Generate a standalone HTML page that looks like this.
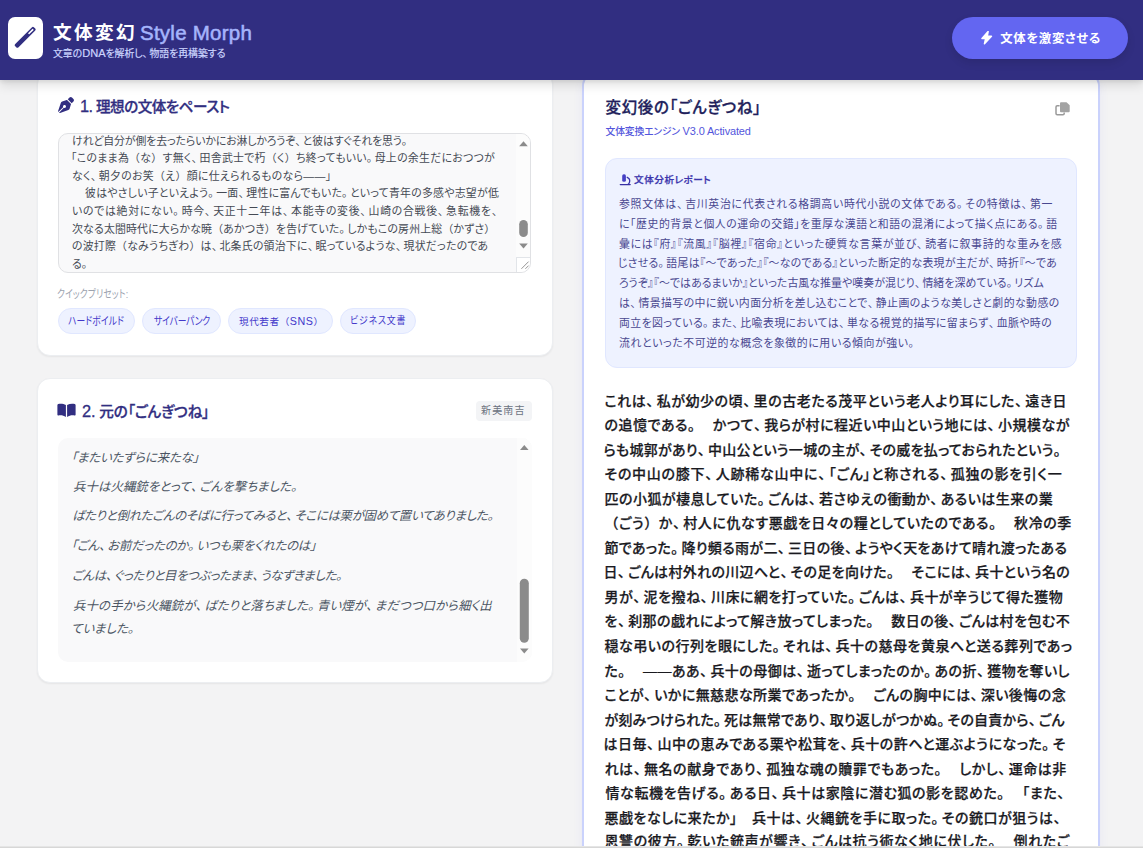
<!DOCTYPE html>
<html lang="ja">
<head>
<meta charset="utf-8">
<title>文体変幻 Style Morph</title>
<style>
*{box-sizing:border-box;margin:0;padding:0}
html,body{width:1143px;height:848px;overflow:hidden}
body{background:#f3f3f4;font-family:"Liberation Sans","Noto Sans CJK JP",sans-serif;position:relative;color:#1f2937}
.abs{position:absolute}
.t{z-index:7;transform-origin:0 50%;position:absolute;white-space:nowrap;height:30px;line-height:30px;font-feature-settings:"palt" 1;font-kerning:normal}
.t .la{font-size:1.12em}
.t .fw{font-feature-settings:"palt" 0}
.t .hw{font-feature-settings:"halt" 1;margin-right:.2em}
.ta{font-size:10.9px;color:#454a54}
.or{font-size:12.4px;color:#4b5563;font-style:italic}
.an{font-size:10.9px;color:#4a4890}
.mn{font-size:14px;color:#1a1a1f;font-weight:500;-webkit-text-stroke:0.25px #1a1a1f}
.h1{font-size:18.7px;font-weight:700;color:#fff}
.h1b{font-size:20.5px;font-weight:400;color:#a5b4fc;-webkit-text-stroke:0.55px #a5b4fc}
.sub{font-size:9.9px;color:#ccd5fe;-webkit-text-stroke:0.2px #ccd5fe}
.btnt{font-size:12.4px;font-weight:700;color:#fff}
.ct{font-size:14.6px;font-weight:500;color:#312e81;-webkit-text-stroke:0.3px #312e81}
.qp{font-size:11px;color:#9ca3af}
.pl{font-size:11px;color:#4338ca}
#p3{font-size:9.6px}
#p4{font-size:10.4px}
.tag{font-size:10px;color:#6b7280}
.rt{font-size:15.5px;font-weight:500;color:#221f5c;-webkit-text-stroke:0.3px #221f5c}
.rs{font-size:9.8px;font-weight:500;color:#5356dc}
.ant{font-size:9.6px;font-weight:500;color:#3b35ad;-webkit-text-stroke:0.25px #3b35ad}
#hdr{left:0;top:0;width:1143px;height:80px;background:#312e81;box-shadow:0 6px 10px rgba(0,0,0,.10),0 2px 4px rgba(0,0,0,.08);z-index:5}
.card{background:#fff;border:1px solid #eceef1;border-radius:13px;box-shadow:0 1px 2px rgba(0,0,0,.06)}
#logo{left:8px;top:17px;width:35px;height:42px;background:#fff;border-radius:7px;z-index:6}
#btn{left:952px;top:17px;width:176px;height:42px;border-radius:21px;background:#6366f1;box-shadow:0 4px 8px rgba(0,0,0,.10);z-index:6}
.pill{top:308px;height:25.5px;border-radius:13px;background:#eef2ff;border:1px solid #e0e7ff}
.z6{z-index:6}

</style>
</head>
<body>
<div id="hdr" class="abs"></div>
<div id="logo" class="abs"></div>
<svg class="abs z6" style="left:8px;top:17px" width="35" height="42" viewBox="0 0 35 42"><g transform="translate(17.150 20.300) rotate(-45)"><rect x="-13.300" y="-2.300" width="26.600" height="4.600" rx="1.300" fill="#312e81"/><rect x="4.800" y="-0.800" width="6.600" height="1.600" rx="0.500" fill="#fff"/></g></svg>
<div id="btn" class="abs"></div>
<svg class="abs z6" style="left:981.200px;top:31.300px" width="11.600" height="13.300" viewBox="0 0 14 16"><path d="M8.6 0.6 L1.2 8.9 L5.6 8.9 L4.2 15.4 L12.6 6.3 L7.6 6.3 Z" fill="#fff" stroke="#fff" stroke-width="1.800" stroke-linejoin="round"/></svg>

<!-- left card 1 -->
<div class="abs card" style="left:37px;top:71px;width:516px;height:284.5px"></div>
<svg class="abs" style="left:58px;top:96.800px" width="16" height="16" viewBox="0 0 512 512"><path fill="#312e81" d="M368.4 18.3L312.7 74.1 437.9 199.300l55.700-55.700c21.900-21.900 21.900-57.300 0-79.200L447.600 18.300c-21.900-21.900-57.300-21.900-79.200 0zM288 94.600l-9.200 2.800L134.700 140.600c-19.900 6-35.700 21.200-42.300 41L3.800 445.800c-3.800 11.300-1 23.900 7.300 32.400L164.700 324.700c-3-6.300-4.700-13.300-4.700-20.700c0-26.500 21.500-48 48-48s48 21.500 48 48s-21.500 48-48 48c-7.400 0-14.400-1.700-20.700-4.700L33.700 500.900c8.600 8.300 21.100 11.200 32.400 7.300l264.300-88.600c19.700-6.600 35-22.400 41-42.300l43.200-144.100 2.700-9.200L288 94.600z"/></svg>
<div class="abs" style="left:58px;top:133px;width:473px;height:139.500px;background:#f9f9fa;border:1px solid #e0e1e4;border-radius:10px;overflow:hidden">
  <div class="abs" style="left:457px;top:0;width:15px;height:124px;background:#fcfcfc"></div>
  <div class="abs" style="left:457px;top:123px;width:15px;height:15px;background:#fff;border-left:1px solid #e2e5e9;border-top:1px solid #e2e5e9"></div>
</div>
<svg class="abs" style="left:516px;top:133px" width="15" height="139" viewBox="0 0 15 139">
  <path d="M3.2 13.2 L7.5 8.2 L11.8 13.2 Z" fill="#8b8b8b"/>
  <rect x="3.2" y="87" width="8.6" height="17" rx="4.3" fill="#8b8b8b"/>
  <path d="M3.2 110.6 L11.8 110.6 L7.5 115.6 Z" fill="#8b8b8b"/>
  <path d="M12.6 128.6 L5.4 135.8 M12.6 132.6 L9.4 135.8" stroke="#7a7a7a" stroke-width="0.8" fill="none"/>
</svg>
<div class="abs pill" style="left:58px;width:76.5px"></div>
<div class="abs pill" style="left:142px;width:78.5px"></div>
<div class="abs pill" style="left:228px;width:104.7px"></div>
<div class="abs pill" style="left:340px;width:76px"></div>

<!-- left card 2 -->
<div class="abs card" style="left:37px;top:377.5px;width:516px;height:305px"></div>
<svg class="abs" style="left:57px;top:402.500px" width="19" height="15" viewBox="0 0 19 15"><path fill="#312e81" d="M8.900 2 C6.500 0.600 3.600 0.300 1.200 1 Q0.400 1.300 0.400 2.100 V11.700 Q0.400 12.700 1.400 12.500 C3.800 11.900 6.400 12.300 8.900 13.900 Z M10.100 2 C12.500 0.600 15.400 0.300 17.800 1 Q18.600 1.300 18.600 2.100 V11.700 Q18.600 12.700 17.600 12.500 C15.200 11.900 12.600 12.300 10.100 13.900 Z"/></svg>
<div class="abs" style="left:476px;top:401px;width:56px;height:20px;background:#f3f4f6;border-radius:4px"></div>
<div class="abs" style="left:57.5px;top:438px;width:474.5px;height:223.5px;background:#f9f9fa;border-radius:10px;overflow:hidden">
  <div class="abs" style="left:459.5px;top:0;width:15px;height:224px;background:#fcfcfc"></div>
</div>
<svg class="abs" style="left:517px;top:438px" width="15" height="224" viewBox="0 0 15 224">
  <path d="M3 12 L7.3 7 L11.600 12 Z" fill="#8b8b8b"/>
  <rect x="2.800" y="140.700" width="9" height="64" rx="4.500" fill="#8b8b8b"/>
  <path d="M3 210.500 L11.600 210.500 L7.300 215.500 Z" fill="#8b8b8b"/>
</svg>

<!-- right card -->
<div class="abs" style="left:582px;top:72px;width:517.5px;height:900px;background:#fff;border:2px solid #cad2fc;border-radius:14px;box-shadow:0 4px 10px rgba(99,102,241,.08)"></div>
<svg class="abs" style="left:1055px;top:102px" width="15" height="14" viewBox="0 0 15 14">
  <path d="M4.600 3.700 H2.200 Q1 3.700 1 4.900 V11.600 Q1 12.800 2.200 12.800 H8 Q9.200 12.800 9.200 11.600 V10.400" fill="none" stroke="#9a9a9a" stroke-width="1.500"/>
  <path d="M6 0.300 H11.500 L14.700 3.300 V9.300 Q14.700 10.300 13.700 10.300 H6 Q5 10.300 5 9.300 V1.300 Q5 0.300 6 0.300 Z" fill="#a3a3a3"/>
</svg>
<div class="abs" style="left:605px;top:158px;width:471.500px;height:209.500px;background:#eef2ff;border:1px solid #e0e7ff;border-radius:12px"></div>
<svg class="abs" style="left:619px;top:173px" width="13" height="13" viewBox="0 0 13 13"><rect x="3.200" y="1.300" width="3.700" height="7.500" rx="1.600" fill="#4540c4"/><path d="M8.200 4.300 Q11.300 5.700 10.600 8.800 Q10.300 10.300 9.200 11.300" fill="none" stroke="#3b35ad" stroke-width="1.300" stroke-linecap="round"/><path d="M1.300 11.600 H11.200" stroke="#3730a3" stroke-width="1.300" stroke-linecap="round"/></svg>

<div class="abs" style="left:0;top:846px;width:1143px;height:2px;background:linear-gradient(#ececec,#d0d0d0);z-index:9"></div>

<div id="ta0" class="t ta" style="left:72.00px;top:125.50px;letter-spacing:-0.106px">けれど自分が側を去ったらいかにお淋しかろうぞ<span class="hw">、</span>と彼はすぐそれを思う<span class="hw">。</span></div>
<div id="ta1" class="t ta" style="left:71.00px;top:143.14px;letter-spacing:0.294px">「このまま為<span class="fw">（</span>な<span class="fw">）</span>す無く<span class="hw">、</span>田舎武士で朽<span class="fw">（</span>く<span class="fw">）</span>ち終ってもいい<span class="hw">。</span>母上の余生だにおつつが</div>
<div id="ta2" class="t ta" style="left:72.00px;top:160.78px;letter-spacing:0.323px">なく<span class="hw">、</span>朝夕のお笑<span class="fw">（</span>え<span class="fw">）</span>顔に仕えられるものなら――」</div>
<div id="ta3" class="t ta" style="left:85.00px;top:178.42px;letter-spacing:0.244px">彼はやさしい子といえよう<span class="hw">。</span>一面<span class="hw">、</span>理性に富んでもいた<span class="hw">。</span>といって青年の多感や志望が低</div>
<div id="ta4" class="t ta" style="left:72.00px;top:196.06px;letter-spacing:0.704px">いのでは絶対にない<span class="hw">。</span>時今<span class="hw">、</span>天正十二年は<span class="hw">、</span>本能寺の変後<span class="hw">、</span>山崎の合戦後<span class="hw">、</span>急転機を<span class="hw">、</span></div>
<div id="ta5" class="t ta" style="left:72.00px;top:213.70px;letter-spacing:0.179px">次なる太閤時代に大らかな暁<span class="fw">（</span>あかつき<span class="fw">）</span>を告げていた<span class="hw">。</span>しかもこの房州上総<span class="fw">（</span>かずさ<span class="fw">）</span></div>
<div id="ta6" class="t ta" style="left:72.00px;top:231.34px;letter-spacing:0.231px">の波打際<span class="fw">（</span>なみうちぎわ<span class="fw">）</span>は<span class="hw">、</span>北条氏の領治下に<span class="hw">、</span>眠っているような<span class="hw">、</span>現状だったのであ</div>
<div id="ta7" class="t ta" style="left:72.00px;top:248.98px;letter-spacing:0.000px">る<span class="hw">。</span></div>
<div id="or0" class="t or" style="left:71.00px;top:443.05px;letter-spacing:-0.164px">「またいたずらに来たな」</div>
<div id="or1" class="t or" style="left:73.00px;top:471.80px;letter-spacing:0.079px">兵十は火縄銃をとって<span class="hw">、</span>ごんを撃ちました<span class="hw">。</span></div>
<div id="or2" class="t or" style="left:72.00px;top:501.05px;letter-spacing:-0.277px">ばたりと倒れたごんのそばに行ってみると<span class="hw">、</span>そこには栗が固めて置いてありました<span class="hw">。</span></div>
<div id="or3" class="t or" style="left:71.00px;top:531.30px;letter-spacing:-0.250px">「ごん<span class="hw">、</span>お前だったのか<span class="hw">。</span>いつも栗をくれたのは」</div>
<div id="or4" class="t or" style="left:72.00px;top:561.05px;letter-spacing:-0.420px">ごんは<span class="hw">、</span>ぐったりと目をつぶったまま<span class="hw">、</span>うなずきました<span class="hw">。</span></div>
<div id="or5" class="t or" style="left:73.00px;top:590.55px;letter-spacing:0.136px">兵十の手から火縄銃が<span class="hw">、</span>ばたりと落ちました<span class="hw">。</span>青い煙が<span class="hw">、</span>まだつつ口から細く出</div>
<div id="or6" class="t or" style="left:71.00px;top:613.80px;letter-spacing:0.000px">ていました<span class="hw">。</span></div>
<div id="an0" class="t an" style="left:619.00px;top:188.75px;letter-spacing:0.684px">参照文体は<span class="hw">、</span>吉川英治に代表される格調高い時代小説の文体である<span class="hw">。</span>その特徴は<span class="hw">、</span>第一</div>
<div id="an1" class="t an" style="left:619.00px;top:208.65px;letter-spacing:0.550px">に「歴史的背景と個人の運命の交錯」を重厚な漢語と和語の混淆によって描く点にある<span class="hw">。</span>語</div>
<div id="an2" class="t an" style="left:619.00px;top:228.55px;letter-spacing:0.685px">彙には『府』『流風』『脳裡』『宿命』といった硬質な言葉が並び<span class="hw">、</span>読者に叙事詩的な重みを感</div>
<div id="an3" class="t an" style="left:618.00px;top:248.45px;letter-spacing:0.250px">じさせる<span class="hw">。</span>語尾は『〜であった』『〜なのである』といった断定的な表現が主だが<span class="hw">、</span>時折『〜であ</div>
<div id="an4" class="t an" style="left:619.00px;top:268.35px;letter-spacing:0.077px">ろうぞ』『〜ではあるまいか』といった古風な推量や嘆奏が混じり<span class="hw">、</span>情緒を深めている<span class="hw">。</span>リズム</div>
<div id="an5" class="t an" style="left:619.00px;top:288.25px;letter-spacing:0.431px">は<span class="hw">、</span>情景描写の中に鋭い内面分析を差し込むことで<span class="hw">、</span>静止画のような美しさと劇的な動感の</div>
<div id="an6" class="t an" style="left:619.00px;top:308.15px;letter-spacing:0.394px">両立を図っている<span class="hw">。</span>また<span class="hw">、</span>比喩表現においては<span class="hw">、</span>単なる視覚的描写に留まらず<span class="hw">、</span>血脈や時の</div>
<div id="an7" class="t an" style="left:619.00px;top:328.05px;letter-spacing:0.577px">流れといった不可逆的な概念を象徴的に用いる傾向が強い<span class="hw">。</span></div>
<div id="mn0" class="t mn" style="left:604.50px;top:385.85px;letter-spacing:0.553px">これは<span class="hw">、</span>私が幼少の頃<span class="hw">、</span>里の古老たる茂平という老人より耳にした<span class="hw">、</span>遠き日</div>
<div id="mn1" class="t mn" style="left:604.50px;top:410.37px;letter-spacing:0.508px">の追憶である<span class="hw">。</span>　かつて<span class="hw">、</span>我らが村に程近い中山という地には<span class="hw">、</span>小規模なが</div>
<div id="mn2" class="t mn" style="left:603.50px;top:434.88px;letter-spacing:0.287px">らも城郭があり<span class="hw">、</span>中山公という一城の主が<span class="hw">、</span>その威を払っておられたという<span class="hw">。</span></div>
<div id="mn3" class="t mn" style="left:604.50px;top:459.40px;letter-spacing:0.735px">その中山の膝下<span class="hw">、</span>人跡稀な山中に<span class="hw">、</span>「ごん」と称される<span class="hw">、</span>孤独の影を引く一</div>
<div id="mn4" class="t mn" style="left:604.50px;top:483.91px;letter-spacing:0.461px">匹の小狐が棲息していた<span class="hw">。</span>ごんは<span class="hw">、</span>若さゆえの衝動か<span class="hw">、</span>あるいは生来の業</div>
<div id="mn5" class="t mn" style="left:604.50px;top:508.43px;letter-spacing:0.576px"><span class="fw">（</span>ごう<span class="fw">）</span>か<span class="hw">、</span>村人に仇なす悪戯を日々の糧としていたのである<span class="hw">。</span>　秋冷の季</div>
<div id="mn6" class="t mn" style="left:604.50px;top:532.94px;letter-spacing:0.360px">節であった<span class="hw">。</span>降り頻る雨が二<span class="hw">、</span>三日の後<span class="hw">、</span>ようやく天をあけて晴れ渡ったある</div>
<div id="mn7" class="t mn" style="left:603.50px;top:557.46px;letter-spacing:0.331px">日<span class="hw">、</span>ごんは村外れの川辺へと<span class="hw">、</span>その足を向けた<span class="hw">。</span>　そこには<span class="hw">、</span>兵十という名の</div>
<div id="mn8" class="t mn" style="left:604.50px;top:581.97px;letter-spacing:0.508px">男が<span class="hw">、</span>泥を撥ね<span class="hw">、</span>川床に網を打っていた<span class="hw">。</span>ごんは<span class="hw">、</span>兵十が辛うじて得た獲物</div>
<div id="mn9" class="t mn" style="left:604.50px;top:606.49px;letter-spacing:0.449px">を<span class="hw">、</span>刹那の戯れによって解き放ってしまった<span class="hw">。</span>　数日の後<span class="hw">、</span>ごんは村を包む不</div>
<div id="mn10" class="t mn" style="left:604.50px;top:631.00px;letter-spacing:0.508px">穏な弔いの行列を眼にした<span class="hw">。</span>それは<span class="hw">、</span>兵十の慈母を黄泉へと送る葬列であっ</div>
<div id="mn11" class="t mn" style="left:604.50px;top:655.51px;letter-spacing:0.463px">た<span class="hw">。</span>　――ああ<span class="hw">、</span>兵十の母御は<span class="hw">、</span>逝ってしまったのか<span class="hw">。</span>あの折<span class="hw">、</span>獲物を奪いし</div>
<div id="mn12" class="t mn" style="left:604.50px;top:680.03px;letter-spacing:0.424px">ことが<span class="hw">、</span>いかに無慈悲な所業であったか<span class="hw">。</span>　ごんの胸中には<span class="hw">、</span>深い後悔の念</div>
<div id="mn13" class="t mn" style="left:604.50px;top:704.54px;letter-spacing:0.228px">が刻みつけられた<span class="hw">。</span>死は無常であり<span class="hw">、</span>取り返しがつかぬ<span class="hw">。</span>その自責から<span class="hw">、</span>ごん</div>
<div id="mn14" class="t mn" style="left:603.50px;top:729.06px;letter-spacing:0.523px">は日毎<span class="hw">、</span>山中の恵みである栗や松茸を<span class="hw">、</span>兵十の許へと運ぶようになった<span class="hw">。</span>そ</div>
<div id="mn15" class="t mn" style="left:604.50px;top:753.58px;letter-spacing:0.553px">れは<span class="hw">、</span>無名の献身であり<span class="hw">、</span>孤独な魂の贖罪でもあった<span class="hw">。</span>　しかし<span class="hw">、</span>運命は非</div>
<div id="mn16" class="t mn" style="left:605.50px;top:778.09px;letter-spacing:0.583px">情な転機を告げる<span class="hw">。</span>ある日<span class="hw">、</span>兵十は家陰に潜む狐の影を認めた<span class="hw">。</span>　「また<span class="hw">、</span></div>
<div id="mn17" class="t mn" style="left:604.50px;top:802.61px;letter-spacing:0.515px">悪戯をなしに来たか」　兵十は<span class="hw">、</span>火縄銃を手に取った<span class="hw">。</span>その銃口が狙うは<span class="hw">、</span></div>
<div id="mn18" class="t mn" style="left:604.50px;top:826.12px;letter-spacing:0.614px">恩讐の彼方<span class="hw">。</span>乾いた銃声が響き<span class="hw">、</span>ごんは抗う術なく地に伏した<span class="hw">。</span>　倒れたご</div>
<div id="h1" class="t h1" style="left:53.00px;top:17.50px;letter-spacing:2.333px">文体変幻</div>
<div id="h1b" class="t h1b" style="left:140.00px;top:18.20px;letter-spacing:0.250px">Style Morph</div>
<div id="sub" class="t sub" style="left:53.00px;top:37.90px;letter-spacing:-0.028px">文章の<span class="la">DNA</span>を解析し<span class="hw">、</span>物語を再構築する</div>
<div id="btnt" class="t btnt" style="left:1000.20px;top:23.50px;letter-spacing:0.671px">文体を激変させる</div>
<div id="c1t" class="t ct" style="left:80.00px;top:91.00px;letter-spacing:-0.542px"><span class="la">1.</span> 理想の文体をペースト</div>
<div id="c2t" class="t ct" style="left:82.00px;top:396.00px;letter-spacing:-0.136px"><span class="la">2.</span> 元の「ごんぎつね」</div>
<div id="qp" class="t qp" style="left:57.00px;top:279.30px;letter-spacing:0.111px;transform:scaleX(0.8)">クイックプリセット:</div>
<div id="p1" class="t pl" style="left:68.00px;top:305.50px;letter-spacing:0.083px;transform:scaleX(0.8)">ハードボイルド</div>
<div id="p2" class="t pl" style="left:154.00px;top:305.50px;letter-spacing:-0.208px;transform:scaleX(0.8)">サイバーパンク</div>
<div id="p3" class="t pl" style="left:239.00px;top:305.50px;letter-spacing:0.562px">現代若者<span class="fw">（</span><span class="la">SNS</span><span class="fw">）</span></div>
<div id="p4" class="t pl" style="left:350.00px;top:305.50px;letter-spacing:0.950px;transform:scaleX(0.86)">ビジネス文書</div>
<div id="tag" class="t tag" style="left:481.00px;top:396.00px;letter-spacing:1.167px">新美南吉</div>
<div id="rt" class="t rt" style="left:605.50px;top:92.50px;letter-spacing:0.625px">変幻後の「ごんぎつね」</div>
<div id="rs" class="t rs" style="left:605.50px;top:115.50px;letter-spacing:-0.136px">文体変換エンジン <span class="la">V3.0 Activated</span></div>
<div id="ant" class="t ant" style="left:634.00px;top:165.00px;letter-spacing:0.536px">文体分析レポート</div>
</body>
</html>
